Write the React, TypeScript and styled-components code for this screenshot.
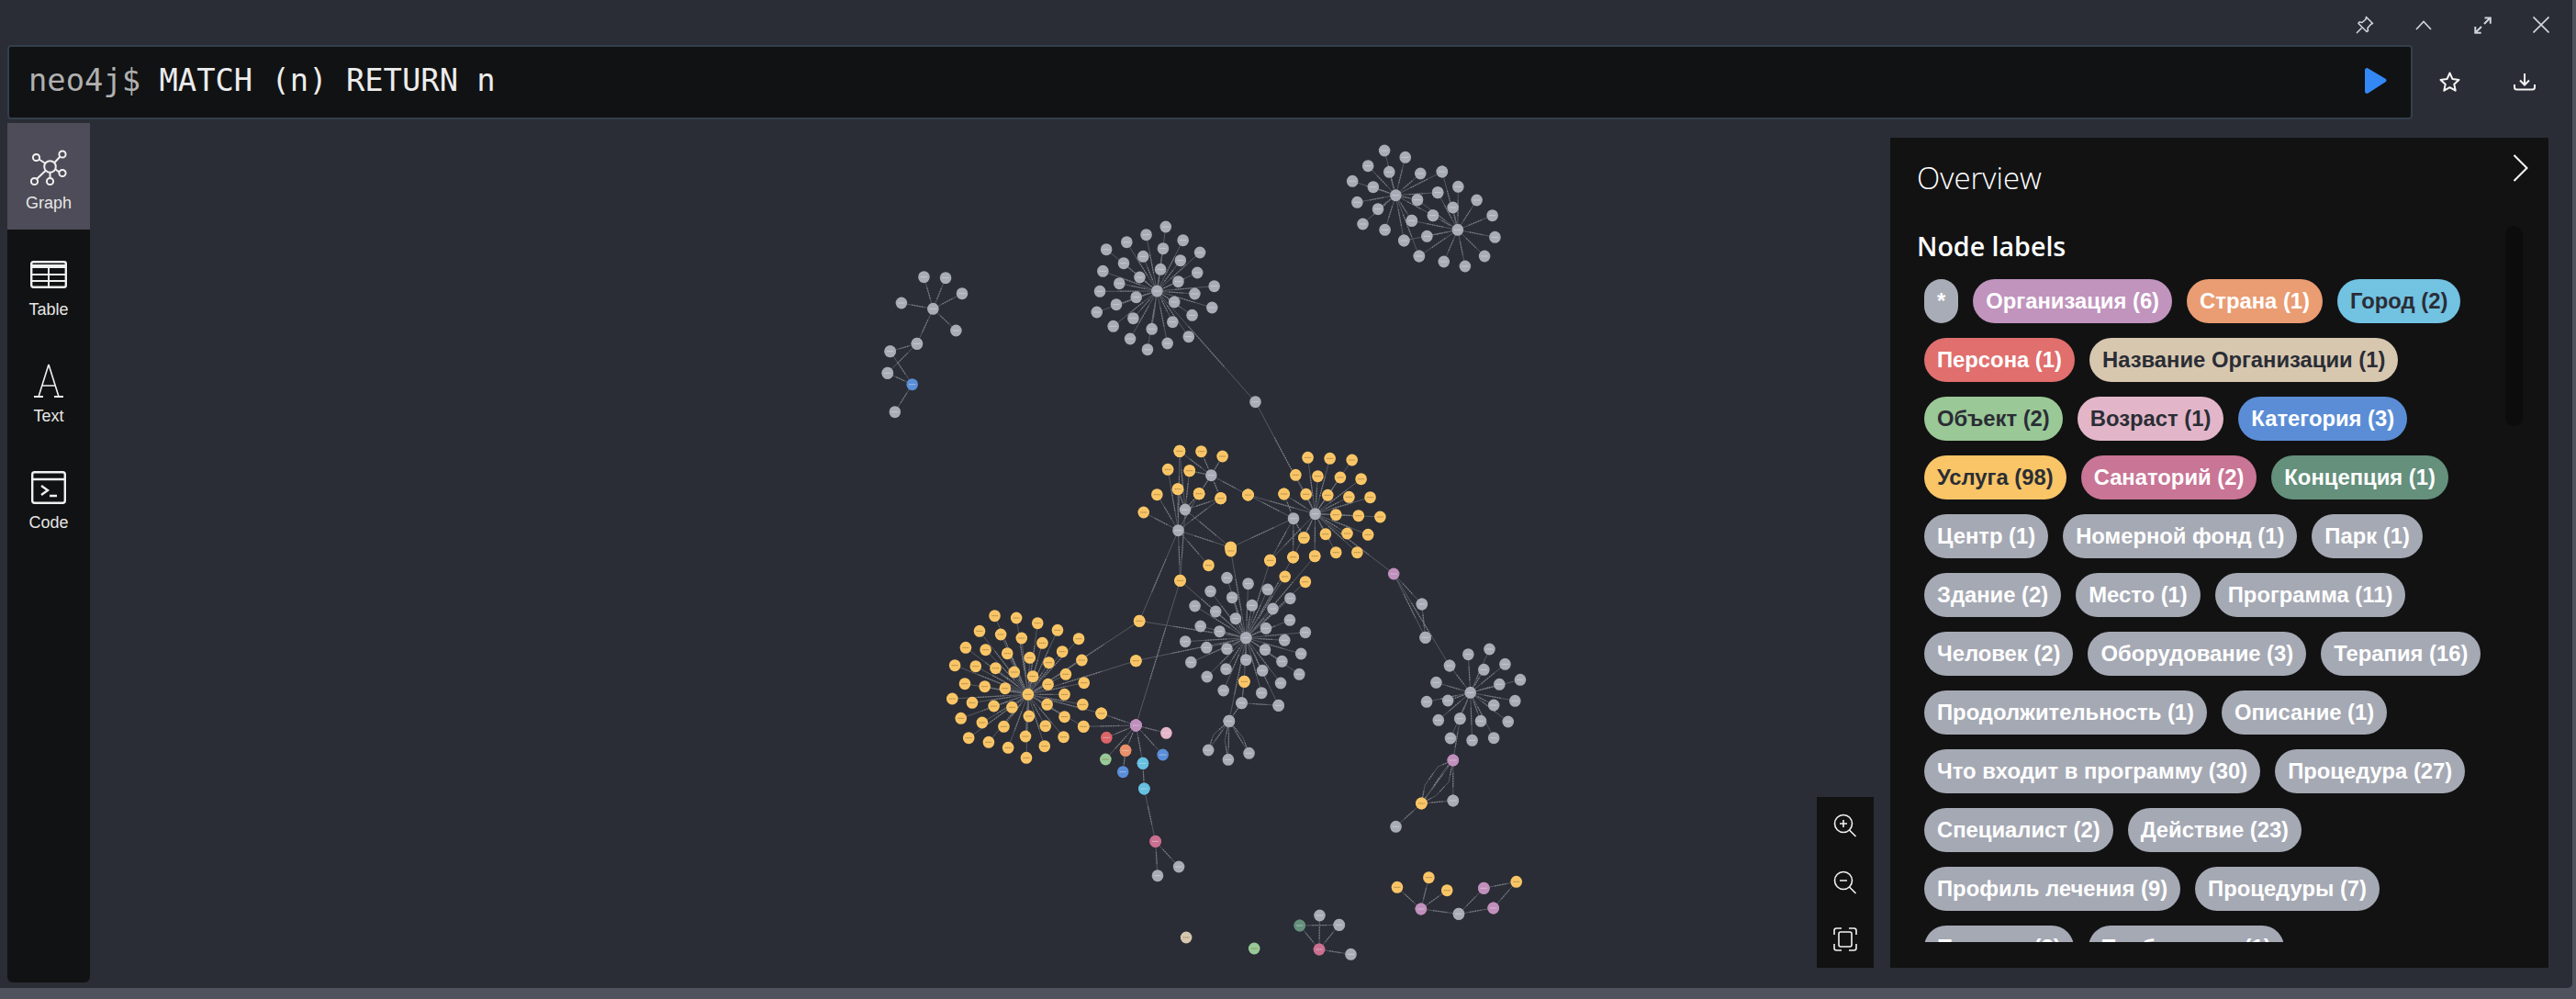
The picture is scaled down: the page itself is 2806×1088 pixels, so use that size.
import React from 'react';
import styled, { createGlobalStyle } from 'styled-components';

type Point = [number, number];
type Tone = 'plain' | 'gold' | 'violet' | 'red' | 'pink' | 'orange' | 'green' | 'blue' | 'cyan' | 'rose' | 'teal' | 'sand';

const TONES: Record<Tone, string> = {
  plain: '#a8acb6',
  gold: '#f9c566',
  violet: '#c08fbc',
  red: '#dd6467',
  pink: '#e6b6c9',
  orange: '#e9906a',
  green: '#98c998',
  blue: '#5a8ed8',
  cyan: '#66c0df',
  rose: '#cb6f90',
  teal: '#64907c',
  sand: '#d7c7af',
};

// the two zoomed sketches of the graph that the coordinates were read from
const a = ([x, y]: Point): Point => [930 + x / 2.119, 140 + y / 3];
const b = ([x, y]: Point): Point => [1000 + x / 2.119, 600 + y / 3];

interface Star {
  hub: Point;
  hubTone: Tone;
  leafTone: Tone;
  leaves: Point[];
}

const star = (map: (p: Point) => Point, hub: Point, hubTone: Tone, leafTone: Tone, leaves: Point[]): Star => ({
  hub: map(hub),
  hubTone,
  leafTone,
  leaves: leaves.map(map),
});

const STARS: Star[] = [
  star(a, [183, 589], 'plain', 'plain', [[162, 485], [212, 488], [250, 539], [110, 570], [236, 660], [146, 703]]),
  star(a, [146, 703], 'plain', 'plain', [[84, 728], [78, 799]]),
  star(a, [135, 836], 'blue', 'plain', [[84, 728], [78, 799], [95, 926]]),
  star(a, [700, 531], 'plain', 'plain', [
    [720, 321], [675, 347], [760, 365], [630, 371], [583, 395], [799, 405], [714, 392], [668, 418], [754, 431],
    [623, 440], [708, 460], [575, 466], [793, 471], [660, 486], [749, 500], [613, 506], [832, 515], [568, 532],
    [787, 540], [652, 551], [740, 567], [606, 575], [561, 600], [827, 585], [781, 610], [645, 620], [736, 632],
    [599, 646], [688, 655], [773, 680], [638, 687], [724, 702], [678, 722], [927, 893],
  ]),
  star(a, [1251, 218], 'plain', 'plain', [
    [1225, 72], [1273, 94], [1187, 122], [1236, 142], [1308, 147], [1358, 141], [1151, 172], [1199, 191], [1301, 233],
    [1162, 241], [1210, 263], [1175, 312], [1226, 331], [1288, 301], [1270, 366], [1348, 209], [1337, 284], [1305, 417],
  ]),
  star(a, [1394, 331], 'plain', 'plain', [
    [1395, 190], [1383, 258], [1438, 234], [1474, 284], [1480, 355], [1456, 417], [1411, 450], [1362, 435], [1305, 417],
    [1323, 352], [1337, 284], [1288, 301], [1348, 209], [1358, 141], [1301, 233], [1270, 366],
  ]),
  star(a, [825, 1133], 'plain', 'gold', [[802, 1055], [851, 1071], [775, 1118], [752, 1054], [910, 1197], [847, 1208], [797, 1193]]),
  star(a, [765, 1245], 'plain', 'gold', [[748, 1178], [797, 1193], [847, 1208], [775, 1118], [752, 1054], [870, 1369]]),
  star(a, [749, 1313], 'plain', 'gold', [[700, 1196], [669, 1254], [725, 1114], [870, 1369], [819, 1427], [752, 1054], [748, 1178], [847, 1208], [797, 1193]]),
  star(a, [1065, 1259], 'plain', 'gold', [
    [1048, 1075], [1099, 1078], [1150, 1083], [1020, 1132], [1071, 1136], [1123, 1140], [1171, 1145], [993, 1194],
    [1044, 1195], [1094, 1198], [1143, 1204], [1192, 1205], [1113, 1262], [1165, 1265], [1215, 1269], [1139, 1323],
    [1187, 1327], [1089, 1325], [1039, 1337], [1113, 1385], [1162, 1385], [1064, 1397], [1014, 1401], [961, 1411], [910, 1197],
  ]),
  star(a, [1015, 1274], 'plain', 'gold', [[910, 1197], [870, 1369], [1039, 1337], [1014, 1401], [961, 1411], [993, 1194]]),
  star(b, [757, 284], 'plain', 'plain', [
    [713, 88], [762, 107], [807, 126], [675, 132], [725, 152], [859, 155], [771, 178], [639, 180], [819, 189], [687, 198],
    [733, 221], [858, 226], [652, 246], [803, 253], [696, 263], [894, 266], [617, 296], [846, 292], [666, 316], [713, 320],
    [801, 323], [884, 336], [630, 364], [757, 356], [840, 361], [711, 386], [795, 391], [880, 403], [667, 411], [837, 432],
    [705, 456], [793, 464], [832, 505], [718, 556],
  ]),
  star(b, [757, 284], 'plain', 'gold', [[847, 84], [894, 101], [813, 31], [866, 20], [916, 17], [722, 0], [605, 97], [753, 427], [511, 229], [503, 359]]),
  star(b, [747, 497], 'plain', 'plain', [[832, 505], [718, 556]]),
  star(b, [753, 427], 'gold', 'plain', [[747, 497]]),
  star(b, [718, 556], 'plain', 'plain', [[670, 651], [716, 682], [764, 661]]),
  star(b, [254, 469], 'gold', 'gold', [
    [177, 212], [227, 219], [276, 236], [322, 259], [371, 287], [142, 262], [191, 273], [239, 285], [287, 301], [110, 316],
    [156, 323], [206, 335], [333, 329], [378, 357], [258, 349], [302, 365], [85, 374], [133, 377], [179, 383], [222, 396],
    [341, 403], [265, 410], [300, 436], [383, 431], [108, 434], [154, 443], [201, 449], [338, 469], [79, 483], [125, 496],
    [175, 507], [217, 511], [298, 502], [380, 502], [423, 531], [256, 540], [338, 542], [99, 547], [148, 561], [198, 574],
    [294, 572], [382, 574], [248, 606], [117, 611], [336, 608], [163, 625], [208, 643], [292, 638], [250, 676], [511, 229], [503, 359],
  ]),
  star(b, [503, 570], 'violet', 'gold', [[423, 531], [382, 574], [605, 97]]),
  star(b, [503, 570], 'violet', 'red', [[435, 610]]),
  star(b, [503, 570], 'violet', 'pink', [[573, 595]]),
  star(b, [503, 570], 'violet', 'orange', [[479, 652]]),
  star(b, [503, 570], 'violet', 'green', [[433, 681]]),
  star(b, [503, 570], 'violet', 'blue', [[565, 666]]),
  star(b, [503, 570], 'violet', 'cyan', [[519, 694]]),
  star(b, [479, 652], 'orange', 'blue', [[473, 722]]),
  star(b, [519, 694], 'cyan', 'cyan', [[522, 777]]),
  star(b, [548, 949], 'rose', 'cyan', [[522, 777]]),
  star(b, [548, 949], 'rose', 'plain', [[602, 1032], [553, 1061]]),
  star(b, [1275, 463], 'plain', 'plain', [
    [1270, 338], [1319, 321], [1355, 370], [1227, 375], [1306, 388], [1390, 421], [1342, 436], [1196, 430], [1174, 493],
    [1223, 489], [1378, 490], [1329, 504], [1251, 548], [1201, 553], [1299, 556], [1362, 558], [1229, 612], [1279, 619], [1329, 611],
  ]),
  star(b, [1098, 75], 'violet', 'plain', [[1163, 174], [1171, 283], [1227, 375]]),
  star(b, [1163, 174], 'plain', 'plain', [[1171, 283]]),
  star(b, [1235, 684], 'violet', 'plain', [[1251, 548], [1235, 816]]),
  star(b, [1235, 684], 'violet', 'gold', [[1162, 825]]),
  star(b, [1162, 825], 'gold', 'plain', [[1235, 816], [1103, 901]]),
  star(b, [1161, 1170], 'violet', 'gold', [[1106, 1099], [1179, 1067], [1221, 1109]]),
  star(b, [1161, 1170], 'violet', 'plain', [[1248, 1186]]),
  star(b, [1248, 1186], 'plain', 'violet', [[1306, 1102], [1328, 1167]]),
  star(b, [1381, 1081], 'gold', 'violet', [[1306, 1102], [1328, 1167]]),
  star(b, [881, 1224], 'teal', 'plain', [[972, 1222]]),
  star(b, [926, 1302], 'rose', 'teal', [[881, 1224]]),
  star(b, [926, 1302], 'rose', 'plain', [[927, 1191], [972, 1222], [999, 1318]]),
  star(b, [619, 1263], 'sand', 'sand', []),
  star(b, [776, 1299], 'green', 'green', []),
];

// bent parallel edges between the same two nodes, drawn as short chains
const bend = (...points: Point[]): [Point, Point][] =>
  points.slice(1).map((p, i) => [b(points[i]), b(p)] as [Point, Point]);

const EXTRA_LINKS: [Point, Point][] = [
  [a([927, 893]), a([1065, 1259])],
  [a([1065, 1259]), b([1098, 75])],
  [a([749, 1313]), b([605, 97])],
  [a([765, 1245]), b([605, 97])],
  [a([749, 1313]), b([511, 229])],
  ...bend([1162, 825], [1170, 765], [1200, 705], [1235, 684]),
  ...bend([1162, 825], [1180, 790], [1215, 715], [1235, 684]),
  ...bend([1162, 825], [1195, 800], [1225, 755], [1235, 684]),
  ...bend([718, 556], [682, 600], [670, 651]),
  ...bend([718, 556], [708, 620], [716, 682]),
  ...bend([718, 556], [750, 610], [764, 661]),
];

const Page = createGlobalStyle`
  html, body { margin: 0; padding: 0; background: #50535e; }
  body { font-family: 'Liberation Sans', Arial, sans-serif; }
`;

const Frame = styled.div`
  width: 2802px;
  height: 1076px;
  background: #2a2d35;
  border-bottom-right-radius: 5px;
  overflow: hidden;
  display: flex;
  flex-direction: column;
`;

const WindowBar = styled.div`
  height: 49px;
  display: flex;
  justify-content: flex-end;
  padding-right: 2px;
`;

const WindowButton = styled.span`
  width: 64px;
  height: 54px;
  display: flex;
  align-items: center;
  justify-content: center;
  color: #cdd4dc;
`;

const EditorRow = styled.div`
  height: 81px;
  display: flex;
  padding-left: 8px;
  margin-bottom: 4px;
`;

const Editor = styled.div`
  width: 2620px;
  box-sizing: border-box;
  background: #111213;
  border: 2px solid #343f4b;
  border-radius: 4px;
  display: flex;
  align-items: center;
  justify-content: space-between;
  padding: 0 26px 4px 21px;
`;

const Query = styled.div`
  font-family: 'DejaVu Sans Mono', 'Liberation Mono', monospace;
  font-size: 33.8px;
  color: #ececec;
  white-space: pre;
`;

const Prompt = styled.span`
  color: #b0b0b0;
`;

const EditorAction = styled.span<{ $wide?: boolean }>`
  width: ${(p) => (p.$wide ? 82 : 81)}px;
  display: flex;
  align-items: center;
  justify-content: center;
  color: #f4f4f4;
  padding-bottom: 2px;
`;

const Body = styled.div`
  flex: 1;
  display: flex;
  min-height: 0;
`;

const Sidebar = styled.nav`
  width: 90px;
  margin: 0 0 6px 8px;
  background: #111213;
  border-radius: 0 0 6px 6px;
`;

const Tile = styled.div<{ $active?: boolean }>`
  height: 116px;
  box-sizing: border-box;
  padding-top: 29px;
  display: flex;
  flex-direction: column;
  align-items: center;
  background: ${(p) => (p.$active ? '#4d4c58' : 'transparent')};
  color: #f0f0f0;
`;

const TileIcon = styled.span`
  height: 40px;
  display: flex;
  align-items: center;
  justify-content: center;
`;

const TileLabel = styled.span`
  margin-top: 6px;
  font-size: 18px;
  line-height: 24px;
  color: #e6e6e6;
`;

const Canvas = styled.div`
  flex: 1;
  position: relative;
`;

const GraphSvg = styled.svg`
  position: absolute;
  inset: 0;
  width: 100%;
  height: 100%;
`;

const Overview = styled.aside`
  position: absolute;
  top: 16px;
  right: 26px;
  bottom: 22px;
  width: 717px;
  background: #121213;
  color: #fff;
  display: flex;
  flex-direction: column;
  padding: 0 0 28px 29px;
  box-sizing: border-box;
`;

const OverviewTitle = styled.h2`
  margin: 22px 0 0;
  font-family: 'Open Sans', sans-serif;
  font-weight: 300;
  font-size: 33px;
  line-height: 44px;
`;

const SectionTitle = styled.h3`
  margin: 32px 0 0;
  font-family: 'Open Sans', sans-serif;
  font-weight: 600;
  font-size: 28.6px;
  line-height: 40px;
`;

const Collapse = styled.span`
  position: absolute;
  top: 18px;
  right: 22px;
  color: #fff;
  display: flex;
`;

const ScrollThumb = styled.span`
  position: absolute;
  top: 96px;
  right: 28px;
  width: 19px;
  height: 218px;
  border-radius: 10px;
  background: #0c0c0d;
`;

const LabelScroll = styled.div`
  flex: 1;
  overflow: hidden;
  margin-top: 16px;
  width: 642px;
  display: flex;
  flex-wrap: wrap;
  align-content: flex-start;
`;

const Pill = styled.span<{ $bg: string; $dark?: boolean }>`
  height: 48px;
  line-height: 48px;
  margin: 0 8px 16px;
  padding: 0 14px;
  border-radius: 24px;
  font-size: 23.8px;
  font-weight: 700;
  white-space: nowrap;
  background: ${(p) => p.$bg};
  color: ${(p) => (p.$dark ? '#2a2d35' : '#fff')};
`;

const ZoomBar = styled.div`
  position: absolute;
  right: 761px;
  bottom: 22px;
  width: 62px;
  height: 186px;
  background: #121213;
  display: flex;
  flex-direction: column;
  color: #f2f2f2;
`;

const ZoomButton = styled.span`
  height: 62px;
  display: flex;
  align-items: center;
  justify-content: center;
`;

const LABELS: { text: string; bg: string; dark?: boolean }[] = [
  { text: '*', bg: '#a8acb6' },
  { text: 'Организация (6)', bg: '#c094bd' },
  { text: 'Страна (1)', bg: '#ea9c72' },
  { text: 'Город (2)', bg: '#72c2e2', dark: true },
  { text: 'Персона (1)', bg: '#e06f6e' },
  { text: 'Название Организации (1)', bg: '#d7c7af', dark: true },
  { text: 'Объект (2)', bg: '#9ac896', dark: true },
  { text: 'Возраст (1)', bg: '#e2b6c8', dark: true },
  { text: 'Категория (3)', bg: '#5b8dd6' },
  { text: 'Услуга (98)', bg: '#f9c566', dark: true },
  { text: 'Санаторий (2)', bg: '#c97595' },
  { text: 'Концепция (1)', bg: '#64907c' },
  { text: 'Центр (1)', bg: '#a5a9b4' },
  { text: 'Номерной фонд (1)', bg: '#a5a9b4' },
  { text: 'Парк (1)', bg: '#a5a9b4' },
  { text: 'Здание (2)', bg: '#a5a9b4' },
  { text: 'Место (1)', bg: '#a5a9b4' },
  { text: 'Программа (11)', bg: '#a5a9b4' },
  { text: 'Человек (2)', bg: '#a5a9b4' },
  { text: 'Оборудование (3)', bg: '#a5a9b4' },
  { text: 'Терапия (16)', bg: '#a5a9b4' },
  { text: 'Продолжительность (1)', bg: '#a5a9b4' },
  { text: 'Описание (1)', bg: '#a5a9b4' },
  { text: 'Что входит в программу (30)', bg: '#a5a9b4' },
  { text: 'Процедура (27)', bg: '#a5a9b4' },
  { text: 'Специалист (2)', bg: '#a5a9b4' },
  { text: 'Действие (23)', bg: '#a5a9b4' },
  { text: 'Профиль лечения (9)', bg: '#a5a9b4' },
  { text: 'Процедуры (7)', bg: '#a5a9b4' },
  { text: 'Питание (2)', bg: '#a5a9b4' },
  { text: 'Пребывание (1)', bg: '#a5a9b4' },
];

const Link: React.FC<{ from: Point; to: Point }> = ({ from, to }) => {
  // the relation caption sits mid edge and reads as a fuzzy, denser stretch at this zoom
  const mx1 = from[0] + (to[0] - from[0]) * 0.32;
  const my1 = from[1] + (to[1] - from[1]) * 0.32;
  const mx2 = from[0] + (to[0] - from[0]) * 0.68;
  const my2 = from[1] + (to[1] - from[1]) * 0.68;
  return (
    <g>
      <line x1={from[0]} y1={from[1]} x2={to[0]} y2={to[1]} stroke="#62656d" strokeWidth={0.8} />
      <line x1={mx1} y1={my1} x2={mx2} y2={my2} stroke="#7d8087" strokeWidth={1.2} strokeDasharray="1.5 1.2" />
    </g>
  );
};

const Dot: React.FC<{ at: Point; tone: Tone }> = ({ at, tone }) => (
  <g>
    <ellipse cx={at[0]} cy={at[1]} rx={6.3} ry={6.5} fill={TONES[tone]} />
    <line
      x1={at[0] - 3.5}
      x2={at[0] + 3.5}
      y1={at[1]}
      y2={at[1]}
      stroke={tone === 'gold' || tone === 'sand' || tone === 'green' ? '#8a6f3a' : '#e4e5e9'}
      strokeWidth={1}
      strokeDasharray="1.5 0.5"
      opacity={0.7}
    />
  </g>
);

const Graph: React.FC = () => (
  <GraphSvg viewBox="98 134 2704 942">
    {STARS.flatMap((s, i) => s.leaves.map((leaf, j) => <Link key={`${i}-${j}`} from={s.hub} to={leaf} />))}
    {EXTRA_LINKS.map(([from, to], i) => (
      <Link key={i} from={from} to={to} />
    ))}
    {STARS.flatMap((s, i) => s.leaves.map((leaf, j) => <Dot key={`${i}-${j}`} at={leaf} tone={s.leafTone} />))}
    {STARS.map((s, i) => (
      <Dot key={i} at={s.hub} tone={s.hubTone} />
    ))}
  </GraphSvg>
);

const line = { fill: 'none', stroke: 'currentColor', strokeWidth: 2 } as const;

const GraphIcon = () => (
  <svg width="40" height="40" viewBox="0 0 40 40" {...line}>
    <circle cx="21.5" cy="18.5" r="6.3" />
    <circle cx="6.5" cy="8.5" r="3.6" />
    <circle cx="35" cy="5" r="3.6" />
    <circle cx="35" cy="25.5" r="3.6" />
    <circle cx="21.5" cy="34.5" r="3.6" />
    <circle cx="4.5" cy="34.5" r="3.6" />
    <path d="M9.5 10.5l7 4.5M32.5 7.5l-6 6.5M31.5 24.5l-4.5-3.5M21.5 25v6M7 32l10-9.5" />
  </svg>
);

const TableIcon = () => (
  <svg width="40" height="30" viewBox="0 0 40 30" {...line}>
    <rect x="1.2" y="1.2" width="37.6" height="27.6" rx="2" strokeWidth="2.4" />
    <path d="M1 6h38" strokeWidth="4" />
    <path d="M1 15h38M1 22h38M20 6v23" />
  </svg>
);

const TextIcon = () => (
  <svg width="34" height="38" viewBox="0 0 34 38">
    <path d="M17 1L6 36M17 1l11 35M10.5 24h13" fill="none" stroke="currentColor" strokeWidth="1.6" />
    <path d="M1 36h10M23 36h10" fill="none" stroke="currentColor" strokeWidth="2" />
  </svg>
);

const CodeIcon = () => (
  <svg width="38" height="36" viewBox="0 0 38 36" {...line}>
    <rect x="1.2" y="1.2" width="35.6" height="33.6" rx="2.5" strokeWidth="2.4" />
    <path d="M1 9h36" strokeWidth="2.4" />
    <path d="M11 16l7 5-7 5M20 27h8" strokeWidth="2.4" />
  </svg>
);

const PinIcon = () => (
  <svg width="20" height="20" viewBox="0 0 20 20" {...line} strokeWidth="1.6">
    <path d="M1 19l5.5-5.5M11.5 1.5l7 7-2 1-3.5 4 .5 3-1.5 1-9-9 1-1.5 3 .5 4-3.5z" strokeLinejoin="round" />
  </svg>
);

const Caret = () => (
  <svg width="18" height="11" viewBox="0 0 18 11" {...line} strokeWidth="1.7">
    <path d="M1 10l8-8.5L17 10" />
  </svg>
);

const ExpandIcon = () => (
  <svg width="19" height="19" viewBox="0 0 19 19" {...line}>
    <path d="M11 8l6.5-6.5M1.5 17.5L8 11M11.5 1.5h6.3v6.3M1.3 11v6.8h6.4" />
  </svg>
);

const CloseIcon = () => (
  <svg width="18" height="18" viewBox="0 0 18 18" {...line} strokeWidth="1.7">
    <path d="M.5.5l17 17M17.5.5l-17 17" />
  </svg>
);

const PlayIcon = () => (
  <svg width="24" height="28" viewBox="0 0 24 28">
    <path d="M0 2.5C0 .6 2-.5 3.5.5l19 11.3c1.4.9 1.4 2.6 0 3.4L3.5 27.5C2 28.5 0 27.4 0 25.5z" fill="#3388f6" />
  </svg>
);

const StarIcon = () => (
  <svg width="23" height="22" viewBox="0 0 23 22" {...line}>
    <path d="M11.5 1.5l3 6.6 7 .8-5.2 4.8 1.4 7-6.2-3.5-6.2 3.5 1.4-7L1.5 8.9l7-.8z" strokeLinejoin="round" />
  </svg>
);

const DownloadIcon = () => (
  <svg width="24" height="20" viewBox="0 0 24 20" {...line}>
    <path d="M12 1v12M7 8.5l5 5 5-5M1 13v3c0 1.6 1 2.5 2.5 2.5h17c1.5 0 2.5-.9 2.5-2.5v-3" />
  </svg>
);

const ChevronIcon = () => (
  <svg width="17" height="30" viewBox="0 0 17 30" {...line}>
    <path d="M1.5 1l14 14-14 14" />
  </svg>
);

const ZoomIcon: React.FC<{ plus?: boolean }> = ({ plus }) => (
  <svg width="26" height="26" viewBox="0 0 26 26" {...line} strokeWidth="1.6">
    <circle cx="11" cy="11" r="9.5" />
    <path d="M17.5 18l7 7M7 11h8" />
    {plus && <path d="M11 7v8" />}
  </svg>
);

const FitIcon = () => (
  <svg width="26" height="26" viewBox="0 0 26 26" {...line} strokeWidth="1.6">
    <rect x="6" y="5" width="14" height="16" rx="2" />
    <path d="M1 8V3.5C1 2 2 1 3.5 1H9M17 1h5.5C24 1 25 2 25 3.5V8M25 18v4.5c0 1.5-1 2.5-2.5 2.5H17M9 25H3.5C2 25 1 24 1 22.5V18" />
  </svg>
);

const App: React.FC = () => (
  <>
    <Page />
    <Frame>
      <WindowBar>
        <WindowButton><PinIcon /></WindowButton>
        <WindowButton><Caret /></WindowButton>
        <WindowButton><ExpandIcon /></WindowButton>
        <WindowButton><CloseIcon /></WindowButton>
      </WindowBar>
      <EditorRow>
        <Editor>
          <Query><Prompt>neo4j$</Prompt> MATCH (n) RETURN n</Query>
          <PlayIcon />
        </Editor>
        <EditorAction><StarIcon /></EditorAction>
        <EditorAction $wide><DownloadIcon /></EditorAction>
      </EditorRow>
      <Body>
        <Sidebar>
          <Tile $active><TileIcon><GraphIcon /></TileIcon><TileLabel>Graph</TileLabel></Tile>
          <Tile><TileIcon><TableIcon /></TileIcon><TileLabel>Table</TileLabel></Tile>
          <Tile><TileIcon><TextIcon /></TileIcon><TileLabel>Text</TileLabel></Tile>
          <Tile><TileIcon><CodeIcon /></TileIcon><TileLabel>Code</TileLabel></Tile>
        </Sidebar>
        <Canvas>
          <Graph />
          <ZoomBar>
            <ZoomButton><ZoomIcon plus /></ZoomButton>
            <ZoomButton><ZoomIcon /></ZoomButton>
            <ZoomButton><FitIcon /></ZoomButton>
          </ZoomBar>
          <Overview>
            <OverviewTitle>Overview</OverviewTitle>
            <Collapse><ChevronIcon /></Collapse>
            <ScrollThumb />
            <SectionTitle>Node labels</SectionTitle>
            <LabelScroll>
              {LABELS.map((l) => (
                <Pill key={l.text} $bg={l.bg} $dark={l.dark}>{l.text}</Pill>
              ))}
            </LabelScroll>
          </Overview>
        </Canvas>
      </Body>
    </Frame>
  </>
);

export default App;
